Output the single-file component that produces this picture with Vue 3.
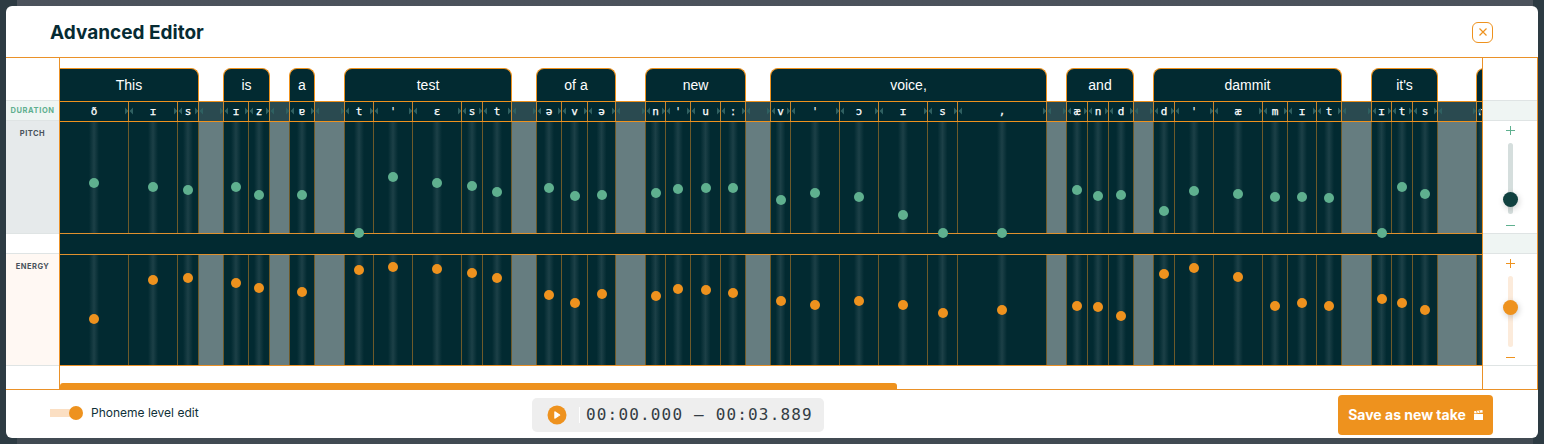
<script setup>
const words = [
  { text: 'This', gapAfter: 25, phones: [
    { ch: 'ð', w: 69, pitch: 183, energy: 319 },
    { ch: 'ɪ', w: 49, pitch: 187, energy: 280 },
    { ch: 's', w: 21, pitch: 190, energy: 278 },
  ] },
  { text: 'is', gapAfter: 20, phones: [
    { ch: 'ɪ', w: 25, pitch: 187, energy: 283 },
    { ch: 'z', w: 21, pitch: 195, energy: 288 },
  ] },
  { text: 'a', gapAfter: 30, phones: [
    { ch: 'ɐ', w: 25, pitch: 195, energy: 292 },
  ] },
  { text: 'test', gapAfter: 25, phones: [
    { ch: 't', w: 29, pitch: 233, energy: 270 },
    { ch: 'ˈ', w: 39, pitch: 177, energy: 267 },
    { ch: 'ɛ', w: 49, pitch: 183, energy: 269 },
    { ch: 's', w: 21, pitch: 186, energy: 273 },
    { ch: 't', w: 29, pitch: 192, energy: 278 },
  ] },
  { text: 'of a', gapAfter: 30, phones: [
    { ch: 'ə', w: 25, pitch: 188, energy: 295 },
    { ch: 'v', w: 26, pitch: 196, energy: 303 },
    { ch: 'ə', w: 28, pitch: 195, energy: 294 },
  ] },
  { text: 'new', gapAfter: 25, phones: [
    { ch: 'n', w: 20, pitch: 193, energy: 296 },
    { ch: 'ˈ', w: 25, pitch: 189, energy: 289 },
    { ch: 'u', w: 30, pitch: 188, energy: 290 },
    { ch: 'ː', w: 25, pitch: 188, energy: 293 },
  ] },
  { text: 'voice,', gapAfter: 20, phones: [
    { ch: 'v', w: 20, pitch: 200, energy: 301 },
    { ch: 'ˈ', w: 49, pitch: 193, energy: 305 },
    { ch: 'ɔ', w: 39, pitch: 197, energy: 301 },
    { ch: 'ɪ', w: 49, pitch: 215, energy: 305 },
    { ch: 's', w: 30, pitch: 233, energy: 313 },
    { ch: ',', w: 89, pitch: 233, energy: 310 },
  ] },
  { text: 'and', gapAfter: 20, phones: [
    { ch: 'æ', w: 21, pitch: 190, energy: 306 },
    { ch: 'n', w: 21, pitch: 196, energy: 307 },
    { ch: 'd', w: 25, pitch: 195, energy: 316 },
  ] },
  { text: 'dammit', gapAfter: 30, phones: [
    { ch: 'd', w: 21, pitch: 211, energy: 274 },
    { ch: 'ˈ', w: 39, pitch: 191, energy: 268 },
    { ch: 'æ', w: 49, pitch: 194, energy: 277 },
    { ch: 'm', w: 25, pitch: 197, energy: 306 },
    { ch: 'ɪ', w: 29, pitch: 197, energy: 303 },
    { ch: 't', w: 25, pitch: 198, energy: 306 },
  ] },
  { text: "it's", gapAfter: 39, phones: [
    { ch: 'ɪ', w: 20, pitch: 233, energy: 299 },
    { ch: 't', w: 21, pitch: 187, energy: 303 },
    { ch: 's', w: 25, pitch: 194, energy: 310 },
  ] },
  // runs on past the right edge of the scroll area
  { text: '', gapAfter: 0, phones: [
    { ch: 'n', w: 10 },
    { ch: '', w: 50 },
  ] },
]

const PITCH_TOP = 122
const ENERGY_TOP = 255

// tabs overlap the lane line on their left, hence the extra pixel
function wordWidth(word) {
  return word.phones.reduce((sum, p) => sum + p.w, 0) + 1
}

// flat list of phonemes and silent gaps, shared by the three lanes
const segments = words.flatMap((word) => {
  const list = word.phones.map((p) => ({ ...p, gap: false }))
  if (word.gapAfter) list.push({ ch: '', w: word.gapAfter, gap: true })
  return list
})
</script>

<template>
  <div class="page">
    <div class="modal">
      <header class="head">
        <h1>Advanced Editor</h1>
        <button class="close">
          <svg width="8" height="8" viewBox="0 0 8 8">
            <path d="M.5.5l7 7M7.5.5l-7 7" stroke="#ee921e" stroke-width="1.2" fill="none" />
          </svg>
        </button>
      </header>

      <div class="editor">
        <div class="labels">
          <div class="cell-top"></div>
          <div class="cell-duration">DURATION</div>
          <div class="cell-pitch">PITCH</div>
          <div class="cell-space"></div>
          <div class="cell-energy">ENERGY</div>
          <div class="cell-bottom"></div>
        </div>

        <div class="timeline">
          <div class="word-row">
            <template v-for="(word, i) in words" :key="i">
              <div class="word" :class="{ first: i === 0 }" :style="{ flexBasis: wordWidth(word) + 'px' }">{{ word.text }}</div>
              <div v-if="word.gapAfter" class="word-gap" :style="{ flexBasis: word.gapAfter + 'px' }"></div>
            </template>
          </div>

          <div class="duration-row">
            <div
              v-for="(seg, i) in segments"
              :key="i"
              class="dur"
              :class="{ gap: seg.gap }"
              :style="{ flexBasis: seg.w + 'px' }"
            >
              <span>{{ seg.ch }}</span>
              <svg class="handle" width="8" height="8" viewBox="0 0 8 8">
                <path d="M0 .5L3.5 4 0 7.5zM8 .5L4.5 4 8 7.5z" fill="#2f6061" />
              </svg>
            </div>
          </div>

          <div class="lane pitch-lane">
            <div
              v-for="(seg, i) in segments"
              :key="i"
              class="seg"
              :class="{ gap: seg.gap }"
              :style="{ flexBasis: seg.w + 'px' }"
            >
              <i v-if="seg.pitch" class="dot dot-green" :style="{ top: seg.pitch - PITCH_TOP + 'px' }"></i>
            </div>
          </div>

          <div class="lane-space"></div>

          <div class="lane energy-lane">
            <div
              v-for="(seg, i) in segments"
              :key="i"
              class="seg"
              :class="{ gap: seg.gap }"
              :style="{ flexBasis: seg.w + 'px' }"
            >
              <i v-if="seg.energy" class="dot dot-orange" :style="{ top: seg.energy - ENERGY_TOP + 'px' }"></i>
            </div>
          </div>

          <div class="scroll-row">
            <div class="scroll-thumb"></div>
          </div>
        </div>

        <div class="controls">
          <div class="cell-top"></div>
          <div class="cell-duration"></div>
          <div class="slider-cell slider-green">
            <span class="plus"></span>
            <div class="track"><i class="thumb"></i></div>
            <span class="minus"></span>
          </div>
          <div class="cell-space"></div>
          <div class="slider-cell slider-orange">
            <span class="plus"></span>
            <div class="track"><i class="thumb"></i></div>
            <span class="minus"></span>
          </div>
          <div class="cell-bottom"></div>
        </div>
      </div>

      <footer class="foot">
        <div class="toggle-wrap">
          <div class="toggle"><i></i></div>
          <span>Phoneme level edit</span>
        </div>

        <div class="player">
          <svg width="20" height="20" viewBox="0 0 20 20">
            <circle cx="10" cy="10" r="9.5" fill="#ee921e" />
            <path d="M8 7l4.5 3L8 13z" fill="#fff" stroke="#fff" stroke-width="1.5" stroke-linejoin="round" />
          </svg>
          <div class="divider"></div>
          <span class="time">00:00.000 – 00:03.889</span>
        </div>

        <button class="save">
          Save as new take
          <svg width="9" height="10" viewBox="0 0 9 10">
            <path d="M0 4h9v6H0z" fill="#fff" />
            <path d="M0 1.2L8.4 0l.4 2.4L.4 3.4z" fill="#fff" />
            <path d="M2.4 .9l.8 2.2M5 .5l.8 2.2" stroke="#ee921e" stroke-width=".8" />
          </svg>
        </button>
      </footer>
    </div>
  </div>
</template>

<style>
body {
  margin: 0;
  background: #434b53;
}
</style>

<style scoped>
.page {
  height: 444px;
  box-sizing: border-box;
  padding: 6px;
  overflow: hidden;
  font-family: Inter, "Liberation Sans", sans-serif;
  background:
    linear-gradient(90deg, #2d3b43 17px, transparent 17px, transparent calc(100% - 11px), #2d3b43 calc(100% - 11px)),
    linear-gradient(#4c535c, #414a52);
}

.modal {
  height: 432px;
  background: #fff;
  border-radius: 6px;
  display: flex;
  flex-direction: column;
  overflow: hidden;
}

.head {
  height: 52px;
  flex: none;
  box-sizing: border-box;
  padding: 0 45px 0 44px;
  display: flex;
  align-items: center;
  justify-content: space-between;
  border-bottom: 1px solid #ea9128;
}

.head h1 {
  margin: 1px 0 0;
  font-size: 19px;
  font-weight: 700;
  color: #062b33;
}

.close {
  width: 21px;
  height: 21px;
  margin-top: 1px;
  padding: 0;
  display: grid;
  place-items: center;
  border: 1.5px solid #ee921e;
  border-radius: 6px;
  background: #fff;
}

.editor {
  height: 331px;
  flex: none;
  display: grid;
  grid-template-columns: 54px minmax(0, 1fr) 56px;
  border-bottom: 1px solid #ea9128;
}

.labels,
.controls {
  display: flex;
  flex-direction: column;
}

.labels {
  border-right: 1px solid #ea9128;
}

.controls {
  border-left: 1px solid #ea9128;
  border-right: 1px solid #ea9128;
}

.cell-top {
  height: 43px;
  flex: none;
  box-sizing: border-box;
  border-bottom: 1px solid #dfe4e4;
}

.cell-duration {
  height: 20px;
  flex: none;
  box-sizing: border-box;
  border-bottom: 1px solid #dfe4e4;
  background: #eff5f3;
  font-size: 7.5px;
  font-weight: 700;
  letter-spacing: 0.6px;
  line-height: 19px;
  text-align: center;
  color: #5fb08f;
}

.cell-pitch,
.cell-energy {
  flex: none;
  padding-top: 8px;
  box-sizing: border-box;
  font-size: 7.5px;
  font-weight: 700;
  letter-spacing: 0.5px;
  text-align: center;
  color: #49535c;
}

.cell-pitch {
  height: 112px;
  background: #e6eaeb;
}

.cell-energy {
  height: 111px;
  background: #fff8f3;
}

.cell-space {
  height: 21px;
  flex: none;
  box-sizing: border-box;
  border-top: 1px solid #dfe4e4;
  border-bottom: 1px solid #dfe4e4;
}

.controls .cell-space {
  background: #eff5f3;
}

.cell-bottom {
  flex: 1;
  border-top: 1px solid #dfe4e4;
}

.timeline {
  min-width: 0;
  overflow: hidden;
  display: flex;
  flex-direction: column;
}

.word-row {
  height: 43px;
  flex: none;
  box-sizing: border-box;
  padding-top: 10px;
  display: flex;
}

.word {
  flex: none;
  box-sizing: border-box;
  margin-left: -1px;
  background: #022a31;
  border: 1px solid #ee921e;
  border-bottom: 0;
  border-radius: 8px 8px 0 0;
  color: #fff;
  font-family: "Liberation Sans", Arial, sans-serif;
  font-size: 14px;
  line-height: 32px;
  text-align: center;
}

.word.first {
  border-top-left-radius: 0;
}

.word-gap {
  flex: none;
}

.duration-row {
  height: 21px;
  flex: none;
  box-sizing: border-box;
  display: flex;
  background: #022a31;
  border-top: 1px solid #ee921e;
  border-bottom: 1px solid #ee921e;
}

.dur {
  flex: none;
  box-sizing: border-box;
  position: relative;
  display: flex;
  align-items: center;
  justify-content: center;
  border-right: 1px solid #c5852e;
  color: #fff;
  font-family: "DejaVu Sans Mono", monospace;
  font-size: 11px;
  -webkit-text-stroke: 0.25px #fff;
}

.dur.gap {
  background: #2a4a50;
}

.handle {
  position: absolute;
  top: 5px;
  right: -4.5px;
  z-index: 1;
}

.lane {
  flex: none;
  display: flex;
  background: #022a31;
}

.pitch-lane {
  height: 111px;
}

.energy-lane {
  height: 111px;
  box-sizing: border-box;
  border-bottom: 1px solid #ea9128;
}

.lane-space {
  height: 22px;
  flex: none;
  box-sizing: border-box;
  background: #022a31;
  border-top: 1px solid #e0912e;
  border-bottom: 1px solid #e0912e;
}

.seg {
  flex: none;
  box-sizing: border-box;
  position: relative;
  border-right: 1px solid #6d5a2a;
  background: linear-gradient(90deg, transparent calc(50% - 5px), #1c4047 50%, transparent calc(50% + 5px)), #022a31;
}

.seg.gap {
  background: #667d80;
}

.dot {
  position: absolute;
  left: 50%;
  width: 10px;
  height: 10px;
  margin: -5px 0 0 -5px;
  border-radius: 50%;
  z-index: 2;
}

.dot-green {
  background: #5fb08f;
}

.dot-orange {
  background: #ee921e;
}

.scroll-row {
  flex: 1;
  display: flex;
  align-items: flex-end;
}

.scroll-thumb {
  width: 837px;
  height: 6px;
  background: #ee921e;
  border-radius: 3px 3px 0 0;
}

.slider-cell {
  height: 112px;
  flex: none;
  box-sizing: border-box;
  padding-top: 5px;
  display: flex;
  flex-direction: column;
  align-items: center;
}

.slider-orange {
  height: 111px;
}

.plus,
.minus {
  position: relative;
  width: 9px;
  height: 9px;
  flex: none;
}

.minus {
  margin-top: 7px;
}

.slider-orange .minus {
  margin-top: 6px;
}

.plus::before,
.minus::before {
  content: "";
  position: absolute;
  left: 0;
  right: 0;
  top: 4px;
  height: 1px;
  background: currentColor;
}

.plus::after {
  content: "";
  position: absolute;
  top: 0;
  bottom: 0;
  left: 4px;
  width: 1px;
  background: currentColor;
}

.slider-green {
  color: #5fb08f;
}

.slider-orange {
  color: #ee921e;
}

.track {
  height: 71px;
  flex: none;
  width: 5px;
  margin-top: 8px;
  border-radius: 3px;
  position: relative;
}

.slider-green .track {
  background: #d5dedd;
}

.slider-orange .track {
  background: #fcebdb;
}

.thumb {
  position: absolute;
  left: -5px;
  width: 15px;
  height: 15px;
  border-radius: 50%;
  box-shadow: 1px 2px 6px rgba(0, 0, 0, 0.2);
}

.slider-green .thumb {
  top: 48.5px;
  background: #10403f;
}

.slider-orange .thumb {
  top: 23.5px;
  background: #ee921e;
}

.foot {
  flex: 1;
  box-sizing: border-box;
  padding: 1px 45px 0 44px;
  display: flex;
  align-items: center;
}

.toggle-wrap {
  width: 482px;
  flex: none;
  margin-bottom: 4px;
  display: flex;
  align-items: center;
  gap: 8px;
  font-size: 12px;
  color: #0f3038;
}

.toggle {
  width: 33px;
  height: 14px;
  position: relative;
  background: linear-gradient(#fbdfc3, #fbdfc3) 0 3px / 29px 8px no-repeat;
}

.toggle i {
  position: absolute;
  right: 0;
  width: 14px;
  height: 14px;
  border-radius: 50%;
  background: #ee921e;
}

.player {
  width: 292px;
  height: 34px;
  box-sizing: border-box;
  padding-left: 15px;
  background: #eeeeee;
  border-radius: 5px;
  display: flex;
  align-items: center;
}

.divider {
  width: 1px;
  height: 16px;
  margin: 0 6px 0 12px;
  background: #fff;
}

.time {
  font-family: "DejaVu Sans Mono", monospace;
  font-size: 16px;
  letter-spacing: 1.17px;
  color: #333c44;
  white-space: nowrap;
}

.save {
  width: 155px;
  height: 40px;
  margin-left: auto;
  padding: 0;
  border: 0;
  border-radius: 4px;
  background: #ee921e;
  color: #fff;
  font-family: Inter, "Liberation Sans", sans-serif;
  font-size: 14px;
  font-weight: 700;
  display: flex;
  align-items: center;
  justify-content: center;
  gap: 8px;
}
</style>
